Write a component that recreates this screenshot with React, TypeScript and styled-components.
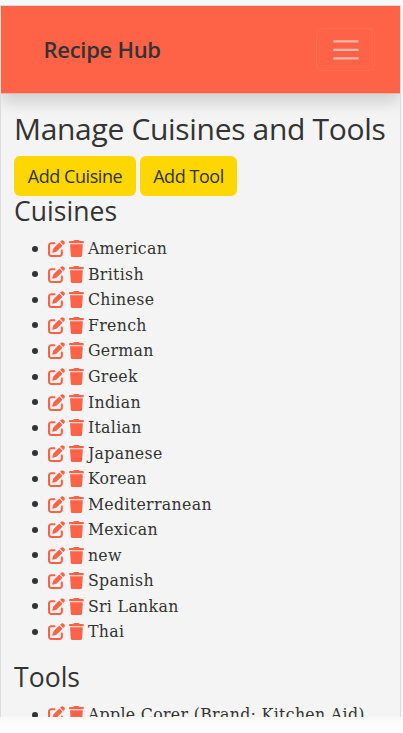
import React from "react";
import styled, { createGlobalStyle } from "styled-components";
import { FaPenToSquare, FaTrash } from "react-icons/fa6";

const GlobalStyle = createGlobalStyle`
  * { box-sizing: border-box; }
  html, body { margin: 0; padding: 0; }
  body { background: #fcfcfc; color: #333; overflow: hidden; }
`;

const sans = `"Open Sans", "Noto Sans", sans-serif`;
const serif = `"DejaVu Serif Condensed", "DejaVu Serif", serif`;

const Page = styled.div`
  height: 733px;
  padding-top: 5px;
  background: linear-gradient(to bottom, #f8f8f8 0, #f8f8f8 716px, #fafafa 717px, #fefefe 733px);
`;

const Frame = styled.div`
  width: 401px;
  height: 712px;
  border: 1px solid #dcdcdc;
  border-bottom: 0;
  background: #f4f4f4;
  overflow: hidden;
`;

const Header = styled.header`
  height: 87px;
  padding: 0 25px 0 42.5px;
  display: flex;
  align-items: center;
  justify-content: space-between;
  background: #ff6347;
  box-shadow: 0 1px 0 #efb0a5, 0 8px 16px rgba(0, 0, 0, 0.17);
`;

const Brand = styled.span`
  font: 600 22px/30px ${sans};
  letter-spacing: -0.28px;
  padding-bottom: 1px;
`;

const Toggle = styled.button`
  width: 59px;
  height: 43px;
  padding: 0;
  flex: none;
  display: flex;
  align-items: center;
  justify-content: center;
  border: 1px solid rgba(255, 255, 255, 0.06);
  border-radius: 6px;
  background: transparent;
`;

const Main = styled.main`
  padding: 17px 13px 0;
`;

const Title = styled.h1`
  margin: 0;
  height: 46px;
  font: 400 30px/38px ${sans};
  letter-spacing: -0.32px;
  white-space: nowrap;
`;

const Actions = styled.div`
  display: flex;
  gap: 4px;
`;

const Button = styled.button<{ $width: number }>`
  width: ${(p) => p.$width}px;
  height: 40px;
  padding: 0;
  border: 0;
  border-radius: 6px;
  background: gold;
  color: #333;
  font: 400 18px/38px ${sans};
  letter-spacing: -0.45px;
  white-space: nowrap;
`;

const Heading = styled.h2`
  margin: 0;
  height: 40px;
  font: 400 26.5px/31px ${sans};
  letter-spacing: 0.05px;
`;

const List = styled.ul`
  margin: 0 0 17px;
  padding-left: 34px;
  list-style: none;
`;

const Row = styled.li`
  height: 25.55px;
  display: flex;
  align-items: center;
  white-space: nowrap;
  color: #ff6347;

  &::before {
    content: "";
    width: 6px;
    height: 6px;
    margin: 0 10px 0 -16px;
    border-radius: 50%;
    background: #333;
  }
`;

const EditIcon = styled(FaPenToSquare)`
  width: 17px;
  height: 17px;
  flex: none;
`;

const TrashIcon = styled(FaTrash)`
  width: 14.875px;
  height: 17px;
  margin: 0 4px;
  flex: none;
`;

const Label = styled.span`
  color: #333;
  font: 400 17.5px/25px ${serif};
  font-stretch: condensed;
  letter-spacing: 0.34px;
`;

const cuisines = [
  "American", "British", "Chinese", "French", "German", "Greek", "Indian", "Italian",
  "Japanese", "Korean", "Mediterranean", "Mexican", "new", "Spanish", "Sri Lankan", "Thai",
];

const tools = ["Apple Corer (Brand: Kitchen Aid)"];

function Items({ names }: { names: string[] }) {
  return (
    <List>
      {names.map((name) => (
        <Row key={name}>
          <EditIcon />
          <TrashIcon />
          <Label>{name}</Label>
        </Row>
      ))}
    </List>
  );
}

export default function App() {
  return (
    <Page>
      <GlobalStyle />
      <Frame>
        <Header>
          <Brand>Recipe Hub</Brand>
          <Toggle aria-label="Toggle navigation">
            <svg width="31.875" height="31.875" viewBox="0 0 30 30">
              <path stroke="rgba(255,255,255,.55)" strokeLinecap="round" strokeMiterlimit="10" strokeWidth="2.2" d="M4 7h22M4 15h22M4 23h22" />
            </svg>
          </Toggle>
        </Header>
        <Main>
          <Title>Manage Cuisines and Tools</Title>
          <Actions>
            <Button $width={122}>Add Cuisine</Button>
            <Button $width={97}>Add Tool</Button>
          </Actions>
          <Heading>Cuisines</Heading>
          <Items names={cuisines} />
          <Heading>Tools</Heading>
          <Items names={tools} />
        </Main>
      </Frame>
    </Page>
  );
}
